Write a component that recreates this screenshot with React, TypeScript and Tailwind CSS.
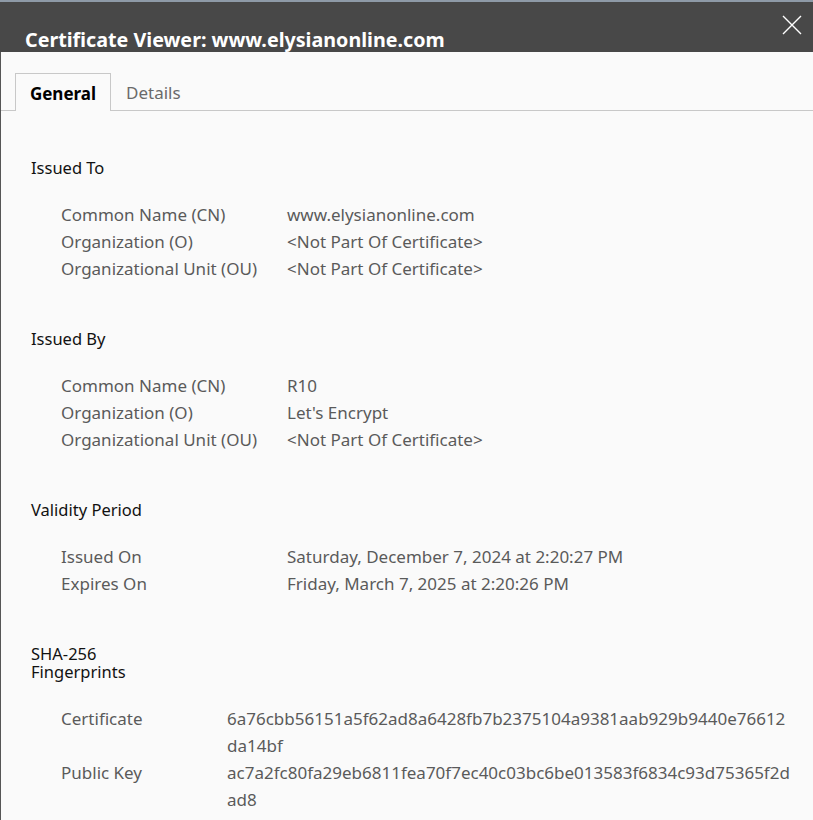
import React from 'react';

type Row = { label: string; value: string[] };

const Section: React.FC<{ title: React.ReactNode; rows: Row[]; labelWidth: string }> = ({ title, rows, labelWidth }) => (
  <section className="pt-[48px]">
    <h3 className="text-[16.5px] leading-[18px] text-[#111]">{title}</h3>
    <div className="mt-[24px] pl-[30px]">
      {rows.map((r) => (
        <div key={r.label} className="flex leading-[27px] text-[17px] text-[#5a5a5a]">
          <div className={`${labelWidth} shrink-0`}>{r.label}</div>
          <div>
            {r.value.map((v) => (
              <div key={v}>{v}</div>
            ))}
          </div>
        </div>
      ))}
    </div>
  </section>
);

export default function App() {
  return (
    <div
      className="w-[813px] h-[820px] overflow-hidden bg-[#fafafa] flex flex-col"
      style={{ fontFamily: '"Segoe UI", "Noto Sans", sans-serif' }}
    >
      {/* title bar */}
      <div className="h-[2px] bg-[#8e9aa7]" />
      <div className="h-[50px] bg-[#484848] flex items-end justify-between relative">
        <h1 className="pl-[25px] text-white font-bold text-[19.7px] leading-[24px]">
          Certificate Viewer: www.elysianonline.com
        </h1>
        <button className="absolute right-[11px] top-[13px] w-[20px] h-[20px] text-white">
          <svg viewBox="0 0 20 20" className="w-[20px] h-[20px]" fill="none" stroke="currentColor" strokeWidth="1.4">
            <path d="M1 1 L19 19 M19 1 L1 19" />
          </svg>
        </button>
      </div>

      <div className="flex-1 border-l border-[#555]">
        {/* tabs */}
        <div className="pt-[21px] pl-[14px] flex items-end border-b border-[#c8c8c8] h-[59px]">
          <div className="h-[38px] w-[96px] -mb-px border border-b-0 border-[#c8c8c8] bg-[#fafafa] flex items-center justify-center pt-[3px] text-[17px] font-bold text-black">
            General
          </div>
          <div className="h-[38px] px-[15px] flex items-center pt-[3px] text-[17px] text-[#6a6a6a]">Details</div>
        </div>

        <div className="pl-[30px] pr-[20px]">
          <Section
            title="Issued To"
            labelWidth="w-[226px]"
            rows={[
              { label: 'Common Name (CN)', value: ['www.elysianonline.com'] },
              { label: 'Organization (O)', value: ['<Not Part Of Certificate>'] },
              { label: 'Organizational Unit (OU)', value: ['<Not Part Of Certificate>'] },
            ]}
          />
          <Section
            title="Issued By"
            labelWidth="w-[226px]"
            rows={[
              { label: 'Common Name (CN)', value: ['R10'] },
              { label: 'Organization (O)', value: ["Let's Encrypt"] },
              { label: 'Organizational Unit (OU)', value: ['<Not Part Of Certificate>'] },
            ]}
          />
          <Section
            title="Validity Period"
            labelWidth="w-[226px]"
            rows={[
              { label: 'Issued On', value: ['Saturday, December 7, 2024 at 2:20:27 PM'] },
              { label: 'Expires On', value: ['Friday, March 7, 2025 at 2:20:26 PM'] },
            ]}
          />
          <Section
            title={
              <>
                SHA-256
                <br />
                Fingerprints
              </>
            }
            labelWidth="w-[166px]"
            rows={[
              { label: 'Certificate', value: ['6a76cbb56151a5f62ad8a6428fb7b2375104a9381aab929b9440e76612', 'da14bf'] },
              { label: 'Public Key', value: ['ac7a2fc80fa29eb6811fea70f7ec40c03bc6be013583f6834c93d75365f2d', 'ad8'] },
            ]}
          />
        </div>
      </div>
    </div>
  );
}
